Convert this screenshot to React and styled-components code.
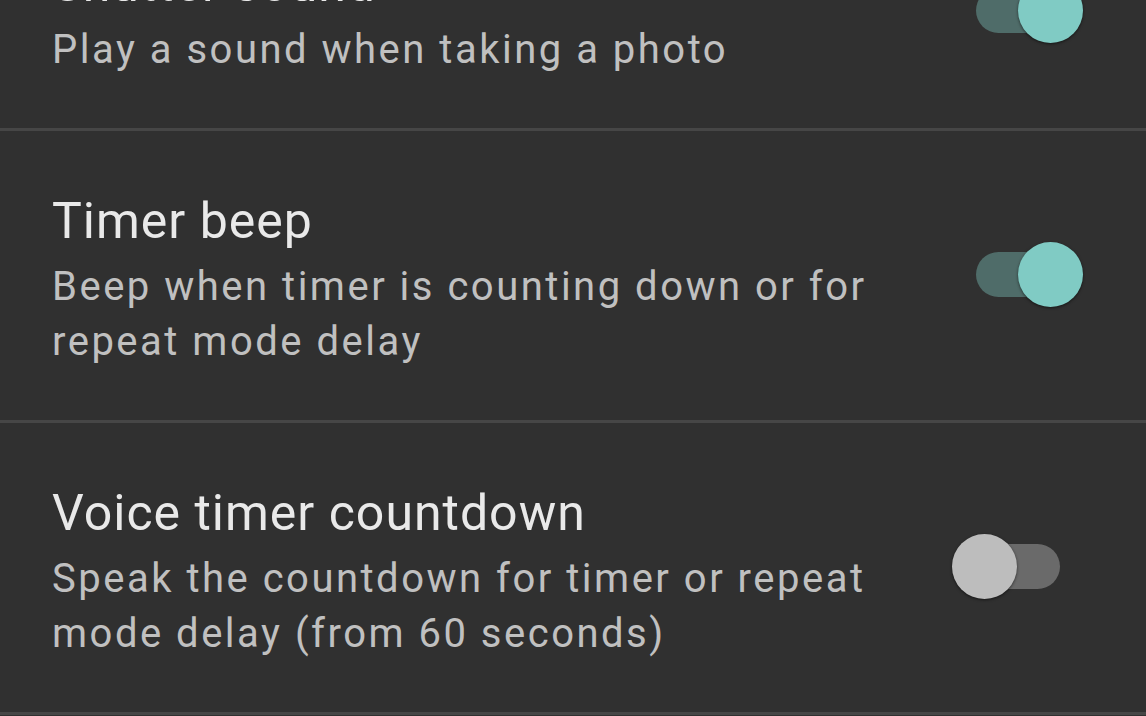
import styled, { createGlobalStyle } from 'styled-components'

const Global = createGlobalStyle`
  html, body {
    margin: 0;
    padding: 0;
    background: #303030;
    overflow: hidden;
  }
  body {
    font-family: Roboto, "Noto Sans", "Liberation Sans", sans-serif;
  }
`

const Screen = styled.div`
  width: 1146px;
  height: 716px;
  overflow: hidden;
  background: #303030;
`

// list is scrolled: first row starts above the top edge
const List = styled.div`
  display: flex;
  flex-direction: column;
  margin-top: -106px;
`

const Row = styled.div`
  display: flex;
  align-items: center;
  padding: 60px 86px 51px 52px;
  border-bottom: 3px solid #464646;
`

const Text = styled.div`
  flex: 1;
  display: flex;
  flex-direction: column;
  gap: 8px;
  padding-right: 72px;
`

const Title = styled.div`
  font-size: 50px;
  line-height: 60px;
  letter-spacing: 1px;
  color: #e9e9e9;
`

const Summary = styled.div`
  font-size: 40px;
  line-height: 55px;
  letter-spacing: 2.5px;
  color: #c0c0c0;
`

const Switch = styled.div`
  position: relative;
  width: 84px;
  height: 45px;
  margin-bottom: 11px;
  border-radius: 23px;
  background: ${p => (p.$on ? '#4f6c69' : '#6a6a6a')};
  flex-shrink: 0;
`

const Thumb = styled.span`
  position: absolute;
  top: -10px;
  left: ${p => (p.$on ? '42px' : '-24px')};
  width: 65px;
  height: 65px;
  border-radius: 50%;
  background: ${p => (p.$on ? '#80cbc4' : '#bdbdbd')};
  box-shadow: 0 1px 3px rgba(0, 0, 0, 0.55);
`

const settings = [
  { title: 'Shutter sound', summary: 'Play a sound when taking a photo', on: true },
  { title: 'Timer beep', summary: 'Beep when timer is counting down or for repeat mode delay', on: true },
  { title: 'Voice timer countdown', summary: 'Speak the countdown for timer or repeat mode delay (from 60 seconds)', on: false },
]

const App = () => {
  return (
    <Screen>
      <Global />
      <List>
        {settings.map(s => (
          <Row key={s.title}>
            <Text>
              <Title>{s.title}</Title>
              <Summary>{s.summary}</Summary>
            </Text>
            <Switch $on={s.on}>
              <Thumb $on={s.on} />
            </Switch>
          </Row>
        ))}
      </List>
    </Screen>
  )
}

export default App
